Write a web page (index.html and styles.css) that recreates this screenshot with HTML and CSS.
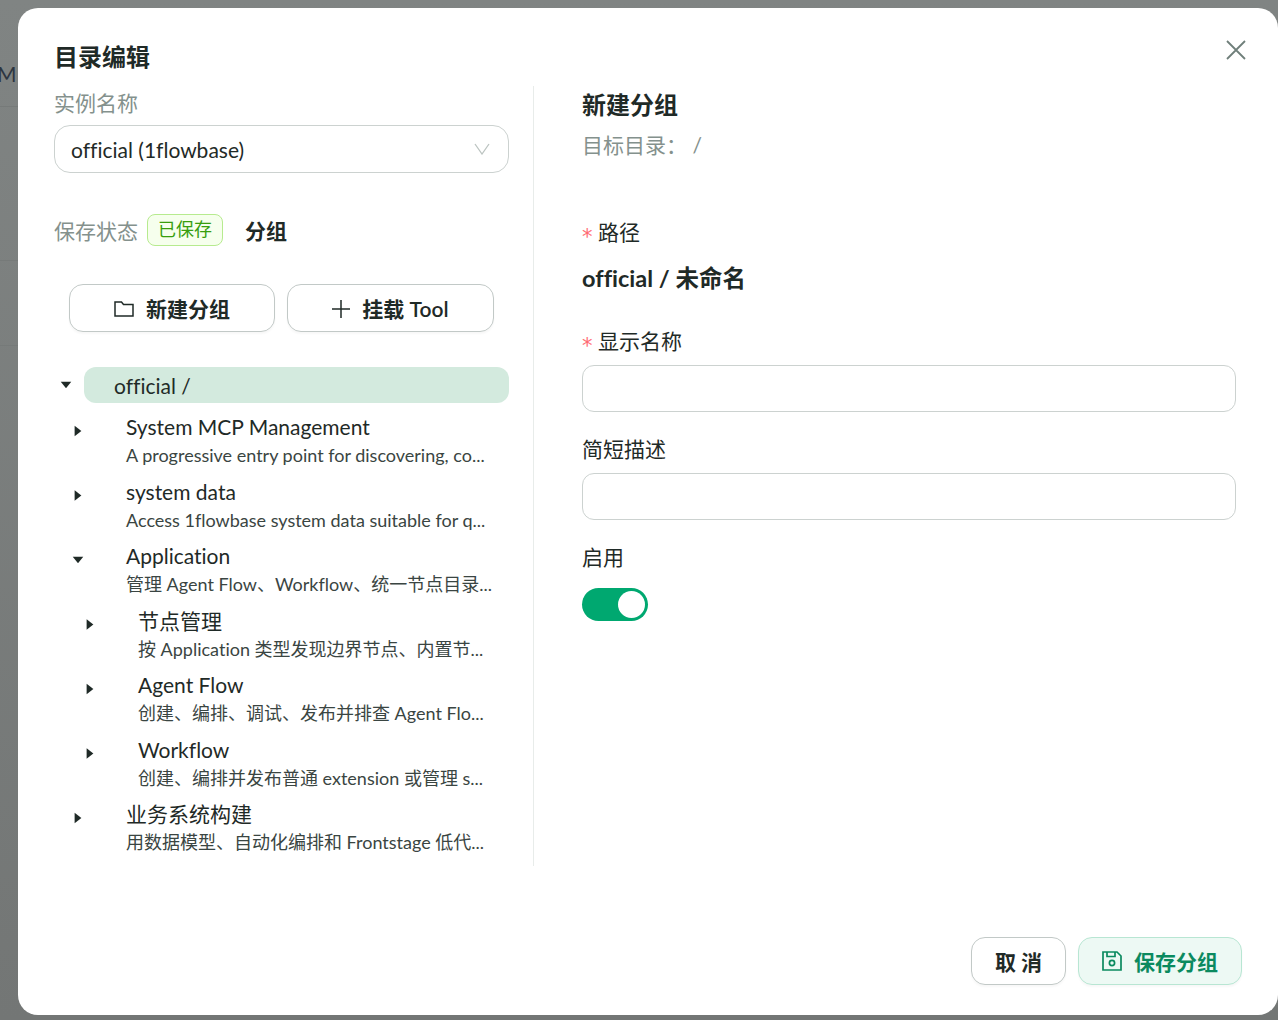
FILE: index.html
```html
<!DOCTYPE html>
<html>
<head>
  <meta charset="utf-8">
  <link rel="stylesheet" href="styles.css">
</head>
<body>
  <div class="backdrop">
    <div class="backdrop-letter">M</div>
    <div class="backdrop-line line-1"></div>
    <div class="backdrop-line line-2"></div>
    <div class="backdrop-line line-3"></div>
  </div>

  <div class="modal">
    <button class="close-btn" aria-label="关闭">
      <svg width="20" height="20" viewBox="0 0 20 20"><path d="M1 1L19 19M19 1L1 19" fill="none" stroke="#6f7f7a" stroke-width="1.8"/></svg>
    </button>

    <div class="modal-title">目录编辑</div>

    <div class="modal-body">
      <div class="left-col">
        <div class="field-label">实例名称</div>
        <div class="select">
          <span>official (1flowbase)</span>
          <svg width="16" height="12" viewBox="0 0 16 12"><path d="M1 1L8 11L15 1" fill="none" stroke="#bcc4c1" stroke-width="1.3"/></svg>
        </div>

        <div class="status-row">
          <span class="status-label">保存状态</span>
          <span class="tag-saved">已保存</span>
          <span class="status-kind">分组</span>
        </div>

        <div class="action-row">
          <button class="btn">
            <svg width="20" height="16" viewBox="0 0 20 16"><path d="M1 15V1H7.5L9.5 3.5H19V15Z" fill="none" stroke="#1f2a27" stroke-width="1.5"/></svg>
            新建分组
          </button>
          <button class="btn">
            <svg width="18" height="18" viewBox="0 0 18 18"><path d="M9 0V18M0 9H18" fill="none" stroke="#1f2a27" stroke-width="1.5"/></svg>
            挂载 Tool
          </button>
        </div>

        <div class="tree">
          <div class="tree-root">
            <span class="caret down"></span>
            <div class="root-label">official /</div>
          </div>

          <div class="tree-node">
            <span class="caret right"></span>
            <div class="node-text">
              <div class="node-title">System MCP Management</div>
              <div class="node-desc">A progressive entry point for discovering, co...</div>
            </div>
          </div>
          <div class="tree-node">
            <span class="caret right"></span>
            <div class="node-text">
              <div class="node-title">system data</div>
              <div class="node-desc">Access 1flowbase system data suitable for q...</div>
            </div>
          </div>
          <div class="tree-node">
            <span class="caret down"></span>
            <div class="node-text">
              <div class="node-title">Application</div>
              <div class="node-desc">管理 Agent Flow、Workflow、统一节点目录...</div>
            </div>
          </div>
          <div class="tree-node nested">
            <span class="caret right"></span>
            <div class="node-text">
              <div class="node-title">节点管理</div>
              <div class="node-desc">按 Application 类型发现边界节点、内置节...</div>
            </div>
          </div>
          <div class="tree-node nested">
            <span class="caret right"></span>
            <div class="node-text">
              <div class="node-title">Agent Flow</div>
              <div class="node-desc">创建、编排、调试、发布并排查 Agent Flo...</div>
            </div>
          </div>
          <div class="tree-node nested">
            <span class="caret right"></span>
            <div class="node-text">
              <div class="node-title">Workflow</div>
              <div class="node-desc">创建、编排并发布普通 extension 或管理 s...</div>
            </div>
          </div>
          <div class="tree-node">
            <span class="caret right"></span>
            <div class="node-text">
              <div class="node-title">业务系统构建</div>
              <div class="node-desc">用数据模型、自动化编排和 Frontstage 低代...</div>
            </div>
          </div>
        </div>
      </div>

      <div class="right-col">
        <div class="section-title">新建分组</div>
        <div class="section-sub">目标目录： /</div>

        <div class="form-label first"><span class="required">*</span>路径</div>
        <div class="path-value">official / 未命名</div>

        <div class="form-label name-label"><span class="required">*</span>显示名称</div>
        <div class="text-input"></div>

        <div class="form-label">简短描述</div>
        <div class="text-input"></div>

        <div class="form-label">启用</div>
        <div class="switch"><span class="switch-knob"></span></div>
      </div>
    </div>

    <div class="modal-footer">
      <button class="btn btn-cancel">取 消</button>
      <button class="btn btn-save">
        <svg width="20" height="20" viewBox="0 0 20 20"><g fill="none" stroke="#0b8a5f" stroke-width="1.7"><path d="M1 1H15L19 5V19H1Z"/><path d="M5 1V5.5H13V1"/><circle cx="10" cy="12" r="2.6"/></g></svg>
        保存分组
      </button>
    </div>
  </div>
</body>
</html>
```

FILE: styles.css
```css
* {
  box-sizing: border-box;
}

html, body {
  height: 100%;
}

body {
  margin: 0;
  padding: 8px 0 0 18px;
  overflow: hidden;
  background: linear-gradient(#808483, #737675);
  color: #1f2a27;
  font-family: Lato, "Noto Sans CJK SC", sans-serif;
  font-size: 21px;
  font-variant-ligatures: none;
}

/* page behind the dialog */
.backdrop {
  position: absolute;
  top: 0;
  left: 0;
  width: 18px;
  height: 100%;
  overflow: hidden;
}

.backdrop-letter {
  position: absolute;
  top: 59px;
  left: -3px;
  font-size: 21px;
  line-height: 30px;
  color: #2d3540;
}

.backdrop-line {
  position: absolute;
  left: 0;
  width: 18px;
  height: 1px;
  background-color: #767a79;
}

.line-1 { top: 106px; }
.line-2 { top: 260px; }
.line-3 { top: 345px; }

.modal {
  position: relative;
  width: 1260px;
  height: 1007px;
  padding: 28px 36px 0;
  background-color: #fff;
  border-radius: 20px;
}

.close-btn {
  position: absolute;
  top: 32px;
  right: 32px;
  width: 20px;
  height: 20px;
  padding: 0;
  border: none;
  background: none;
}

.close-btn svg {
  display: block;
}

.modal-title {
  font-size: 24px;
  font-weight: bold;
  line-height: 42px;
}

.modal-body {
  display: flex;
  height: 780px;
  margin-top: 8px;
}

.left-col {
  width: 480px;
  padding-right: 24px;
  border-right: 1px solid #e8ecea;
}

.field-label {
  line-height: 34px;
  color: #84918d;
}

.select {
  display: flex;
  align-items: center;
  justify-content: space-between;
  height: 48px;
  margin-top: 5px;
  padding: 0 18px 0 16px;
  border: 1px solid #ccd2d0;
  border-radius: 16px;
}

.status-row {
  display: flex;
  align-items: center;
  margin-top: 41px;
  height: 32px;
}

.status-label {
  color: #84918d;
}

.tag-saved {
  margin-left: 9px;
  padding: 0 10px;
  height: 32px;
  line-height: 29px;
  font-size: 18px;
  color: #389e0d;
  background-color: #f6ffed;
  border: 1px solid #b7eb8f;
  border-radius: 8px;
}

.status-kind {
  margin-left: 22px;
  font-weight: bold;
}

.action-row {
  display: flex;
  gap: 12px;
  margin-top: 38px;
  padding: 0 15px;
}

.action-row svg {
  margin-top: 2px;
}

.btn {
  display: flex;
  align-items: center;
  justify-content: center;
  gap: 12px;
  height: 48px;
  padding: 0;
  font-family: inherit;
  font-size: 21px;
  font-weight: 600;
  color: #1f2a27;
  background-color: #fff;
  border: 1px solid #c2c9c7;
  border-radius: 14px;
  box-shadow: 0 2px 2px rgba(0, 0, 0, 0.03);
}

.action-row .btn {
  flex: 1;
}

.action-row .btn:first-child {
  flex: 0 0 206px;
}

.tree {
  margin-top: 35px;
}

.tree-root {
  display: flex;
  align-items: center;
}

.root-label {
  flex: 1;
  height: 36px;
  margin-left: 12px;
  padding-left: 30px;
  line-height: 38px;
  background-color: #d3eade;
  border-radius: 12px;
}

.tree-node {
  display: flex;
  align-items: flex-start;
  height: 64.5px;
  padding-left: 18px;
}

.tree-root + .tree-node {
  margin-top: 8px;
}

.tree-node.nested {
  padding-left: 30px;
}

.caret {
  flex: none;
  width: 12px;
  height: 12px;
  background-color: #1f2a27;
}

.tree-node .caret {
  margin-top: 14px;
}

.caret.right {
  clip-path: polygon(22% 6%, 78% 50%, 22% 94%);
}

.caret.down {
  clip-path: polygon(6% 22%, 94% 22%, 50% 78%);
}

.tree-root .caret {
  margin-left: 6px;
}

.node-text {
  flex: 1;
  min-width: 0;
  margin-left: 42px;
}

.node-title {
  line-height: 32px;
}

.node-desc {
  font-size: 18px;
  line-height: 24px;
  color: #3a4542;
}

.right-col {
  flex: 1;
  padding-left: 48px;
  padding-right: 6px;
}

.section-title {
  font-size: 24px;
  font-weight: bold;
  line-height: 38px;
}

.section-sub {
  margin-top: 2px;
  line-height: 38px;
  color: #84918d;
}

.form-label {
  margin-top: 19px;
  line-height: 36px;
}

.form-label.first {
  margin-top: 50px;
}

.form-label.name-label {
  margin-top: 27px;
}

.required {
  margin-right: 5.5px;
  color: #ff6b74;
  font-family: "DejaVu Sans", sans-serif;
  font-size: 21px;
  vertical-align: -4px;
  line-height: 1;
}

.path-value {
  margin-top: 10px;
  font-size: 23.5px;
  font-weight: bold;
  line-height: 36px;
}

.text-input {
  height: 47px;
  margin-top: 6px;
  border: 1px solid #ccd2d0;
  border-radius: 12px;
}

.switch {
  position: relative;
  width: 66px;
  height: 33px;
  margin-top: 13px;
  background-color: #00a870;
  border-radius: 17px;
}

.switch-knob {
  position: absolute;
  top: 3px;
  right: 3px;
  width: 27px;
  height: 27px;
  background-color: #fff;
  border-radius: 50%;
}

.modal-footer {
  display: flex;
  justify-content: flex-end;
  gap: 12px;
  margin-top: 71px;
}

.btn-cancel {
  width: 95px;
}

.btn-save {
  width: 164px;
  color: #0b8a5f;
  background-color: #edf9f4;
  border-color: #b8e6d3;
}
```
